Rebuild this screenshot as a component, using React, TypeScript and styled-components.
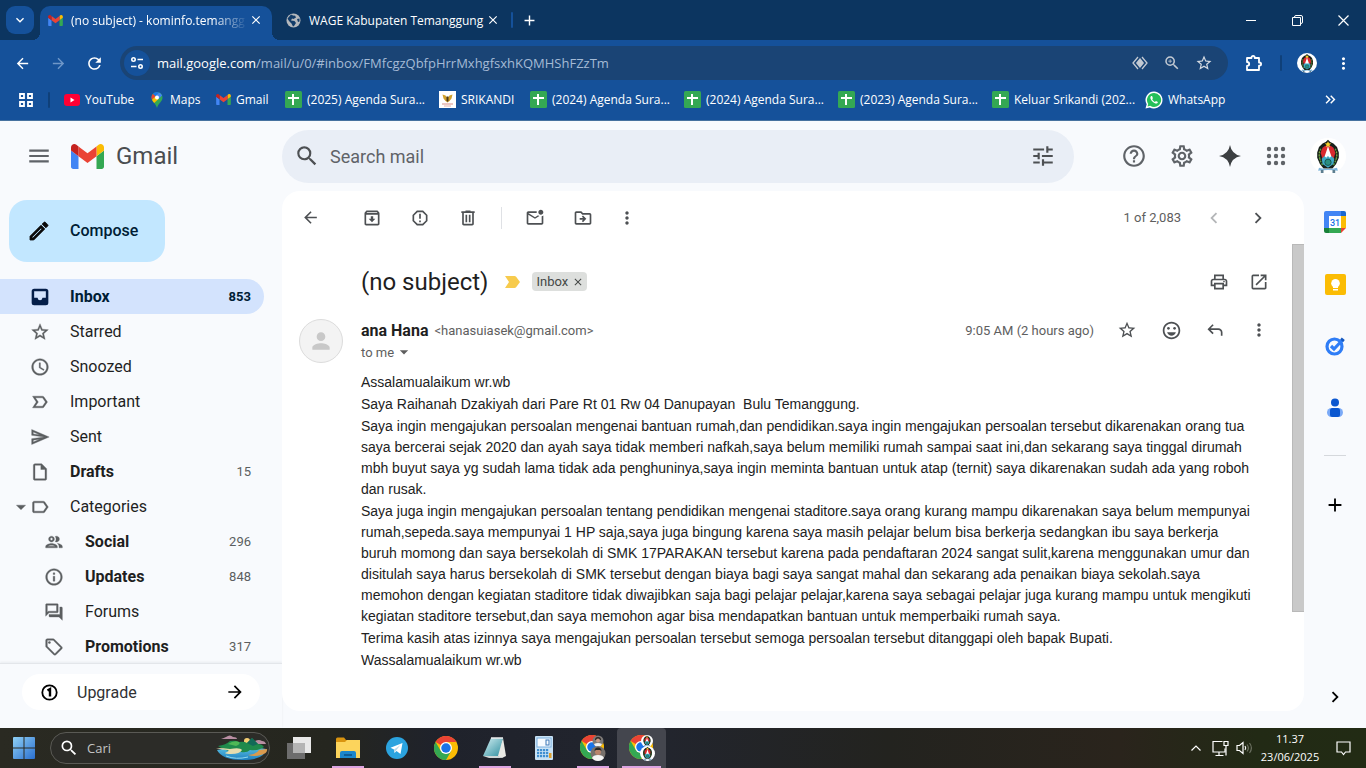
import React from 'react';
import styled, { createGlobalStyle, css } from 'styled-components';
import {
  MdMenu, MdSearch, MdTune, MdHelpOutline, MdOutlineSettings, MdOutlineEdit, MdStarBorder,
  MdAccessTime, MdLabelImportantOutline, MdOutlineSend, MdOutlineInsertDriveFile, MdLabelOutline,
  MdOutlinePeople, MdInfoOutline, MdOutlineForum, MdOutlineLocalOffer, MdArrowBack, MdArrowForward,
  MdOutlineArchive, MdReportGmailerrorred, MdOutlineMarkEmailUnread, MdOutlineDriveFileMove, MdMoreVert,
  MdOutlinePrint, MdOpenInNew, MdOutlineEmojiEmotions, MdAdd, MdChevronLeft, MdChevronRight,
  MdArrowDropDown, MdRefresh, MdKeyboardDoubleArrowRight, MdZoomIn, MdPerson,
  MdClose, MdKeyboardArrowDown,
} from 'react-icons/md';

const UI = "'Open Sans', 'Noto Sans', sans-serif";
const GS = "Roboto, 'Liberation Sans', sans-serif";

const Global = createGlobalStyle`
  *, *::before, *::after { box-sizing: border-box; }
  body { margin: 0; font-family: ${GS}; color: #1f1f1f; background: #f8fafd; }
  button { border: 0; padding: 0; margin: 0; background: none; font: inherit; color: inherit; cursor: pointer; }
  a { color: inherit; text-decoration: none; }
  svg { display: block; flex: none; }
  h1, h2, p { margin: 0; font-weight: 400; }
`;

const Screen = styled.div`
  height: 100vh;
  display: flex;
  flex-direction: column;
  overflow: hidden;
`;

const IconButton = styled.button<{ $w?: number; $h?: number; $c?: string }>`
  width: ${p => p.$w ?? 48}px;
  height: ${p => p.$h ?? 40}px;
  flex: none;
  display: flex;
  align-items: center;
  justify-content: center;
  color: ${p => p.$c ?? '#4d5053'};
`;

const Spacer = styled.div`flex: 1;`;

/* ---------- Browser chrome ---------- */

const TabStrip = styled.div`
  height: 40px;
  flex: none;
  display: flex;
  align-items: center;
  background: #0c3560;
  color: #fff;
  font: 12px ${UI};
`;

const TabSearch = styled.button`
  width: 28px;
  height: 28px;
  margin: 0 6px;
  border-radius: 9px;
  background: #15519a;
  display: flex;
  align-items: center;
  justify-content: center;
`;

const Tab = styled.div<{ $active?: boolean }>`
  position: relative;
  height: 34px;
  align-self: flex-end;
  display: flex;
  align-items: center;
  width: ${p => (p.$active ? 232 : 239)}px;
  padding: 0 ${p => (p.$active ? 8 : 10)}px 6px ${p => (p.$active ? 8 : 14)}px;
  border-radius: 10px 10px 0 0;
  ${p => p.$active && css`
    background: #15519a;
    &::before, &::after {
      content: '';
      position: absolute;
      bottom: 0;
      width: 8px;
      height: 8px;
    }
    &::before { left: -8px; background: radial-gradient(circle at 0 0, transparent 8px, #15519a 8px); }
    &::after { right: -8px; background: radial-gradient(circle at 100% 0, transparent 8px, #15519a 8px); }
  `}
`;

const TabTitle = styled.span<{ $fade?: boolean }>`
  flex: 1;
  min-width: 0;
  margin-left: 8px;
  white-space: nowrap;
  ${p => p.$fade && css`mask-image: linear-gradient(90deg, #000 80%, transparent);`}
`;

const VLine = styled.span<{ $c: string }>`
  width: 2px;
  height: 16px;
  background: ${p => p.$c};
  border-radius: 1px;
  flex: none;
`;

const AddressRow = styled.div`
  height: 46px;
  flex: none;
  display: flex;
  align-items: center;
  padding: 0 4px;
  background: #15519a;
  color: #fff;
`;

const Omnibox = styled.div`
  flex: 1;
  height: 34px;
  margin: 0 10px 0 8px;
  border-radius: 17px;
  background: #1a4475;
  display: flex;
  align-items: center;
  padding: 0 8px 0 4px;
`;

const ProfileZone = styled.div`
  display: flex;
  align-items: center;
  gap: 8px;
  margin-left: 10px;
`;

const SiteInfo = styled.button`
  width: 26px;
  height: 26px;
  border-radius: 13px;
  background: #15519a;
  display: flex;
  align-items: center;
  justify-content: center;
  margin-right: 7px;
`;

const Url = styled.div`
  flex: 1;
  font: 13px ${UI};
  color: #a5bbd6;
  white-space: nowrap;
  b { font-weight: 400; color: #fff; }
`;

const BookmarkBar = styled.nav`
  height: 35px;
  flex: none;
  display: flex;
  align-items: center;
  padding: 0 20px 7px 18px;
  background: #15519a;
  border-bottom: 1px solid #47729f;
  color: #fff;
  font: 12px ${UI};
`;

const BookmarkDivider = styled.span`
  width: 30px;
  padding-left: 14px;
  display: flex;
`;

const Bookmark = styled.a<{ $w: number }>`
  width: ${p => p.$w}px;
  display: flex;
  align-items: center;
  gap: 5px;
  white-space: nowrap;
`;

/* ---------- Gmail ---------- */

const Mail = styled.div`
  flex: 1;
  min-height: 0;
  display: flex;
  flex-direction: column;
  background: #f8fafd;
`;

const Header = styled.header`
  height: 70px;
  flex: none;
  display: flex;
  align-items: center;
  padding-right: 8px;
`;

const Brand = styled.div`
  width: 282px;
  flex: none;
  display: flex;
  align-items: center;
  padding-left: 15px;
`;

const Wordmark = styled.a`
  display: flex;
  align-items: center;
  gap: 12px;
  margin-left: 8px;
  font-size: 24px;
  color: #4a4d50;
`;

const SearchForm = styled.form`
  flex: 1;
  max-width: 792px;
  height: 53px;
  border-radius: 27px;
  background: #e9eef6;
  display: flex;
  align-items: center;
  padding: 0 7px 0 2px;
  input {
    flex: 1;
    min-width: 0;
    border: 0;
    outline: 0;
    padding: 0;
    background: none;
    font: 18px ${GS};
    color: #444746;
  }
  input::placeholder { color: #5f6368; opacity: 1; }
`;

const HeaderTools = styled.div`
  margin-left: auto;
  display: flex;
  align-items: center;
`;

const Body = styled.div`
  flex: 1;
  min-height: 0;
  display: flex;
`;

const Sidebar = styled.aside`
  width: 282px;
  flex: none;
  display: flex;
  flex-direction: column;
`;

const Compose = styled.button`
  flex: none;
  align-self: flex-start;
  width: 156px;
  height: 62px;
  margin: 9px 0 17px 9px;
  padding: 0 0 1px 18px;
  border-radius: 18px;
  background: #c2e7ff;
  color: #001d35;
  display: flex;
  align-items: center;
  gap: 19px;
  font-size: 16px;
  font-weight: 500;
  svg { color: #0a0a0a; }
  path:not([fill='none']) { stroke-width: 0.8px; }
`;

const FolderList = styled.nav`
  flex: 1;
  min-height: 0;
  overflow: hidden;
`;

const Folder = styled.a<{ $active?: boolean; $bold?: boolean; $sub?: boolean }>`
  position: relative;
  height: 35px;
  margin-right: 18px;
  padding: 0 13px 0 ${p => (p.$sub ? 44 : 30)}px;
  border-radius: 0 18px 18px 0;
  display: flex;
  align-items: center;
  gap: ${p => (p.$sub ? 21 : 20)}px;
  font-size: 16px;
  font-weight: ${p => (p.$active || p.$bold ? 700 : 400)};
  color: ${p => (p.$active ? '#001d35' : '#1f1f1f')};
  background: ${p => (p.$active ? '#d3e3fd' : 'transparent')};
  svg { color: ${p => (p.$active ? '#041e49' : '#5b5e60')}; }
  path:not([fill='none']) { stroke-width: 0.4px; }
`;

const Count = styled.span<{ $active?: boolean }>`
  margin-left: auto;
  font-size: 13px;
  font-weight: ${p => (p.$active ? 700 : 400)};
  color: ${p => (p.$active ? '#001d35' : '#5b5e60')};
`;

const Caret = styled.span`
  position: absolute;
  left: 10px;
`;

const UpgradeBox = styled.div`
  height: 65px;
  flex: none;
  padding: 10px 22px 0;
  border-top: 1px solid #e3e6ea;
  box-shadow: 0 -1px 2px #e9ecf0;
`;

const Upgrade = styled.button`
  width: 100%;
  height: 36px;
  padding: 0 15px 0 18px;
  border-radius: 18px;
  background: #fff;
  display: flex;
  align-items: center;
  font-size: 16px;
  color: #303134;
  svg { color: #000; }
  span { flex: 1; text-align: left; padding-left: 18px; }
`;

const Card = styled.main`
  flex: 1;
  min-width: 0;
  margin-bottom: 17px;
  border-radius: 18px;
  background: #fff;
  display: flex;
  flex-direction: column;
`;

const Toolbar = styled.div`
  height: 53px;
  flex: none;
  display: flex;
  align-items: center;
  padding: 0 24px 0 4px;
`;

const ToolGap = styled.span`width: 14px;`;

const ToolDivider = styled.span`
  width: 1px;
  height: 22px;
  margin: 0 9px;
  background: #dfe1e5;
`;

const Pager = styled.span`
  font-size: 13px;
  color: #5e5e5e;
  margin-right: 11px;
`;

const Scroller = styled.div`
  flex: 1;
  min-height: 0;
  display: flex;
  overflow: hidden;
`;

const Thread = styled.article`
  flex: 1;
  min-width: 0;
`;

const ScrollThumb = styled.div`
  width: 12px;
  height: 368px;
  background: #c9c9c9;
  border: 1px solid #b9b9b9;
  border-right: 0;
`;

const SubjectRow = styled.div`
  height: 75px;
  display: flex;
  align-items: center;
  padding: 0 13px 0 79px;
  h1 { font-size: 24px; line-height: 32px; margin-right: 17px; }
`;

const LabelChip = styled.span`
  display: flex;
  align-items: center;
  gap: 4px;
  height: 19px;
  margin-left: 12px;
  padding: 0 3px 0 4px;
  border-radius: 4px;
  background: #dddfdd;
  font-size: 13px;
  color: #444746;
`;

const Message = styled.div`
  display: flex;
  align-items: flex-start;
  padding: 0 11px 0 17px;
`;

const Avatar = styled.div`
  width: 44px;
  height: 44px;
  margin-right: 18px;
  flex: none;
  border-radius: 50%;
  border: 1px solid #dcdcdc;
  background: #f3f3f3;
  color: #c8c8c8;
  display: flex;
  align-items: center;
  justify-content: center;
`;

const MessageMain = styled.div`flex: 1; min-width: 0;`;

const SenderRow = styled.div`
  height: 22px;
  display: flex;
  align-items: center;
  font-size: 13px;
  color: #5e5e5e;
  h2 { font-size: 16px; font-weight: 700; color: #1f1f1f; margin-right: 6px; }
`;

const SentAt = styled.time`margin-right: 11px;`;

const Recipient = styled.button`
  display: flex;
  align-items: center;
  height: 22px;
  font-size: 13px;
  color: #5e5e5e;
`;

const Letter = styled.div`
  margin-top: 9px;
  font: 14px/21px 'Liberation Sans', Arial, sans-serif;
  color: #222;
  white-space: pre;
  p + p { margin-top: 1px; }
`;

const SidePanel = styled.aside`
  width: 62px;
  flex: none;
  display: flex;
  flex-direction: column;
  align-items: center;
  padding-bottom: 11px;
`;

const PanelLine = styled.span`
  width: 22px;
  height: 1px;
  margin: 16px 0 18px;
  background: #d5d8dc;
`;

/* ---------- Taskbar ---------- */

const Taskbar = styled.footer`
  height: 40px;
  flex: none;
  display: flex;
  align-items: center;
  padding-right: 11px;
  background: linear-gradient(90deg, #2a2a22 0%, #25261f 24%, #1f222b 32%, #22252e 48%, #23231f 65%, #2a241c 82%, #222a15 92%, #222b14 100%);
  color: #fff;
  font-family: ${UI};
`;

const TaskSearch = styled.label`
  width: 220px;
  height: 32px;
  margin-left: 2px;
  margin-right: 4px;
  padding: 0 1px 0 8px;
  border: 1px solid #5a5a55;
  border-radius: 16px;
  background: #2c2c28;
  display: flex;
  align-items: center;
  gap: 8px;
  input {
    flex: 1;
    min-width: 0;
    border: 0;
    outline: 0;
    padding: 0;
    background: none;
    font: 13px ${UI};
    color: #c4c4c4;
  }
  input::placeholder { color: #c4c4c4; opacity: 1; }
`;

const TaskButton = styled.button<{ $open?: boolean; $current?: boolean }>`
  width: 49px;
  height: 40px;
  display: flex;
  align-items: center;
  justify-content: center;
  border-radius: 4px 4px 0 0;
  background: ${p => (p.$current ? '#44464e' : 'none')};
  position: relative;
  ${p => (p.$open || p.$current) && css`
    &::after {
      content: '';
      position: absolute;
      bottom: 0;
      width: ${p.$current ? 39 : 32}px;
      height: 2px;
      background: #dba3e0;
    }
  `}
`;

const Clock = styled.time`
  width: 66px;
  margin: 0 8px 0 0;
  text-align: center;
  font-size: 11px;
  line-height: 18px;
`;

/* ---------- Drawings ---------- */

const GmailLogo = ({ w }: { w: number }) => (
  <svg width={w} height={Math.round(w * 0.75)} viewBox="52 42 88 66">
    <path fill="#4285f4" d="M58 108h14V74L52 59v43c0 3.32 2.69 6 6 6" />
    <path fill="#34a853" d="M120 108h14c3.32 0 6-2.69 6-6V59l-20 15" />
    <path fill="#fbbc04" d="M120 48v26l20-15v-8c0-7.42-8.47-11.65-14.4-7.2" />
    <path fill="#ea4335" d="M72 74V48l24 18 24-18v26L96 92" />
    <path fill="#c5221f" d="M52 51v8l20 15V48l-5.6-4.2c-5.94-4.45-14.4-.22-14.4 7.2" />
  </svg>
);

const Crest = ({ size }: { size: number }) => (
  <svg width={size} height={size} viewBox="0 0 40 40">
    <circle cx="20" cy="20" r="20" fill="#fff" />
    <path d="M20 2q2 3 6 4l4 4 2 6v6l-3 7-4 5H15l-4-5-3-7v-6l2-6 4-4q4-1 6-4z" fill="#17201a" />
    <path d="M12 12c-3 6-2 12 2 18M28 12c3 6 2 12-2 18" stroke="#5aa03f" strokeWidth="1.6" strokeDasharray="2 1.4" fill="none" />
    <path d="M10.500 15q-1 6 2 11M29.500 15q1 6-2 11" stroke="#d9c04a" strokeWidth="0.8" strokeDasharray="1 2" fill="none" />
    <path d="M20 8c5 0 7.500 4 8 9l-2 7H14l-2-7c.5-5 3-9 8-9z" fill="#d92a2f" />
    <path d="M20 9l1.500 5 2.500 7-1.500 3h-5L16 21l2.500-7z" fill="#fff" />
    <path d="M13 23l3-3 2 2 2-2 2 2 2-2 3 3-1 6-6 4-6-4z" fill="#3fa9c4" />
    <circle cx="20" cy="27" r="3.500" fill="#2a8f80" stroke="#15504a" />
    <path d="M20 3.500l1.100 2.400 2.500.2-2 1.700.7 2.500-2.300-1.300-2.300 1.300.7-2.500-2-1.700 2.500-.2z" fill="#f3d02c" />
    <path d="M10 33q10 3 20 0l1 3.500q-11-2-22 0z" fill="#7fb6dc" />
    <path d="M12 35.500h3V39h-3zM25 35.500h3V39h-3z" fill="#5d7e90" />
  </svg>
);

const SheetIcon = () => (
  <svg width="17" height="17" viewBox="0 0 17 17">
    <rect width="17" height="17" rx="1.500" fill="#34a853" />
    <path d="M8 3v11M3 7h11" stroke="#fff" strokeWidth="2" />
  </svg>
);

const YoutubeIcon = () => (
  <svg width="16" height="16" viewBox="0 0 16 16">
    <rect y="2" width="16" height="12" rx="3" fill="#f03" />
    <path d="M6.500 5.500v5L10.500 8z" fill="#fff" />
  </svg>
);

const MapsIcon = () => (
  <svg width="16" height="16" viewBox="0 0 16 16">
    <path d="M8 0a5.500 5.500 0 0 0-5.500 5.500c0 4 4 5.500 5.500 10.500 1.500-5 5.500-6.500 5.500-10.500A5.500 5.500 0 0 0 8 0z" fill="#34a853" />
    <path d="M8 0a5.500 5.500 0 0 0-4.200 2L6.500 4.200 10 .4A5.500 5.500 0 0 0 8 0z" fill="#1a73e8" />
    <path d="M3.800 2A5.500 5.500 0 0 0 3 7.800l3.500-3.600z" fill="#ea4335" />
    <path d="M3 7.800c.5 1.200 1.300 2.100 2.200 3.200L9.500 7 6.300 4.400z" fill="#fbbc04" />
    <path d="M10 .4 6.600 4.300 9.500 7l3.600-3.500A5.500 5.500 0 0 0 10 .4z" fill="#4285f4" />
    <circle cx="8" cy="5.500" r="2" fill="#fff" />
  </svg>
);

const SrikandiIcon = () => (
  <svg width="17" height="17" viewBox="0 0 17 17">
    <rect width="17" height="17" fill="#fff" />
    <path d="M3.500 3.500l3 1 1 1.500h2l1-1.500 3-1-1 4-2 2.500-2 1.500-2-1.500-2-2.500z" fill="#d0a02c" />
    <path d="M7.500 5.500h2v4l-1 1.500-1-1.500z" fill="#4a3a1c" />
    <path d="M3 13h11" stroke="#d98f86" /><path d="M5 15h7" stroke="#e3b0aa" />
  </svg>
);

const WhatsAppIcon = () => (
  <svg width="18" height="18" viewBox="0 0 18 18">
    <path d="M9 .5a8.500 8.500 0 0 0-7.300 12.800L.5 17.500l4.300-1.100A8.500 8.500 0 1 0 9 .5z" fill="#fff" />
    <path d="M9 2a7 7 0 0 0-5.800 10.900l-.7 2.600 2.700-.7A7 7 0 1 0 9 2z" fill="#25c05a" />
    <path d="M6.300 5c-1 .7-1.200 1.900-.5 3.300 1 2 2.500 3.500 4.600 4.200 1.200.3 2.300-.2 2.500-1.600l-2-1-.9 1c-1.300-.5-2.300-1.500-2.800-2.700l.7-.9L7.100 5z" fill="#fff" />
  </svg>
);

const GlobeIcon = () => (
  <svg width="15" height="15" viewBox="0 0 15 15">
    <circle cx="7.500" cy="7.500" r="7" fill="#b4b8bc" />
    <path d="M5 1.500q2 1.500 4 1l1 2-2.500 1.500L6 5.500l-1 2 3.500.5 1.500 2-2 3-1 .5-1.500-3L3 8 1.500 5.500zM11 6l2.500-.5v3L12 9z" fill="#123c69" />
  </svg>
);

const PuzzleIcon = () => (
  <svg width="18" height="18" viewBox="0 0 18 18" fill="none" stroke="currentColor" strokeWidth="1.800" strokeLinejoin="round">
    <path d="M2 4h4.500V3.500a1.600 1.600 0 0 1 3.200 0V4H14v4.500h.5a1.600 1.600 0 0 1 0 3.200H14V16H2v-4q2.200-.2 2.200-2T2 8z" />
  </svg>
);

const AppsDots = () => (
  <svg width="20" height="20" viewBox="0 0 20 20" fill="currentColor">
    {[3, 10, 17].map(y => [3, 10, 17].map(x => <circle key={`${x}-${y}`} cx={x} cy={y} r="2.200" />))}
  </svg>
);

const GridIcon = () => (
  <svg width="16" height="16" viewBox="0 0 16 16" fill="none" stroke="#fff" strokeWidth="1.800">
    <path d="M2 2h4v4H2zM10 2h4v4h-4zM2 10h4v4H2zM10 10h4v4h-4z" />
  </svg>
);

const SiteControls = () => (
  <svg width="14" height="14" viewBox="0 0 14 14" fill="none" stroke="#fff" strokeWidth="1.600">
    <circle cx="3.500" cy="3.500" r="1.700" /><path d="M7.500 3.500H13M1 10.500h5.500" /><circle cx="10.500" cy="10.500" r="1.700" />
  </svg>
);

const InboxIcon = ({ size }: { size: number }) => (
  <svg width={size} height={size} viewBox="0 0 24 24" fill="currentColor" fillRule="evenodd">
    <path d="M5 2h14q3 0 3 3v14q0 3-3 3H5q-3 0-3-3V5q0-3 3-3zm0 3v8h4q.5 3 3 3t3-3h4V5z" />
  </svg>
);

const TrashIcon = () => (
  <svg width="20" height="20" viewBox="0 0 24 24" fill="currentColor">
    <path d="M15 4V3H9v1H4v2h1v13c0 1.100.9 2 2 2h10c1.100 0 2-.9 2-2V6h1V4h-5zm2 15H7V6h10v13z" />
    <path d="M9 8h2v9H9zm4 0h2v9h-2z" />
  </svg>
);

const ReplyIcon = () => (
  <svg width="20" height="20" viewBox="0 -960 960 960" fill="currentColor">
    <path d="M760-200v-160q0-50-35-85t-85-35H273l144 144-57 56-240-240 240-240 57 56-144 144h367q83 0 141.500 58.500T840-360v160h-80Z" />
  </svg>
);

const Spark = () => (
  <svg width="22" height="22" viewBox="0 0 22 22"><path d="M11 0q1.600 9.400 11 11-9.400 1.600-11 11-1.600-9.400-11-11 9.400-1.600 11-11z" fill="#3c3f42" /></svg>
);

const ImportantMark = () => (
  <svg width="15" height="12" viewBox="0 0 15 12"><path d="M0 0h9.500q1 0 1.600.8L15 6l-3.900 5.200q-.6.800-1.600.8H0l4-6z" fill="#f7cb4d" /></svg>
);

const OneIcon = () => (
  <svg width="19" height="19" viewBox="0 0 19 19" fill="none" stroke="currentColor">
    <circle cx="9.500" cy="9.500" r="7.200" strokeWidth="1.800" /><path d="M7.500 7.500 10 6v7.500" strokeWidth="2.400" />
  </svg>
);

const CalendarIcon = () => (
  <svg width="22" height="22" viewBox="0 0 22 22">
    <path d="M2 0h15v5H5v12H0V2Q0 0 2 0z" fill="#4285f4" /><path d="M17 0h3q2 0 2 2v3h-5z" fill="#1967d2" />
    <path d="M17 5h5v12h-5z" fill="#fbbc04" /><path d="M5 17h12v5H5z" fill="#34a853" />
    <path d="M0 17h5v5H2q-2 0-2-2z" fill="#188038" /><path d="M17 17h5l-5 5z" fill="#ea4335" />
    <path d="M5 5h12v12H5z" fill="#fff" />
    <text x="11" y="14.500" textAnchor="middle" fontFamily="Roboto, sans-serif" fontSize="9" fontWeight="500" fill="#1a73e8">31</text>
  </svg>
);

const KeepIcon = () => (
  <svg width="21" height="21" viewBox="0 0 21 21">
    <rect width="21" height="21" rx="2" fill="#fbbc04" />
    <circle cx="10.500" cy="9.300" r="4.300" fill="#fff" /><path d="M8 12h5v2H8zM8 15h5v1.600H8z" fill="#fff" />
  </svg>
);

const TasksIcon = () => (
  <svg width="20" height="20" viewBox="0 0 20 20" fill="none">
    <circle cx="9.500" cy="10.500" r="7.500" stroke="#2f7df6" strokeWidth="3.200" />
    <path d="M6 10l3 3 8.500-9" stroke="#2f7df6" strokeWidth="3.200" /><path d="M16 2.500l3 2.500" stroke="#1558c0" strokeWidth="2.500" />
  </svg>
);

const ContactsIcon = () => (
  <svg width="18" height="20" viewBox="0 0 18 20">
    <circle cx="9" cy="4.500" r="4" fill="#0b57d0" /><rect x="1" y="10" width="16" height="9" rx="4.500" fill="#7baaf7" />
    <rect x="4" y="10" width="10" height="9" rx="2.500" fill="#0b57d0" />
  </svg>
);

const WindowsLogo = () => (
  <svg width="22" height="22" viewBox="0 0 22 22">
    <defs><linearGradient id="win" x1="0" y1="0" x2="1" y2="1"><stop offset="0" stopColor="#8fd0f5" /><stop offset="1" stopColor="#2a6fd0" /></linearGradient></defs>
    <path d="M1 0h9.500v10.500H0V1q0-1 1-1zM11.500 0H21q1 0 1 1v9.500H11.500zM0 11.500h10.500V22H1q-1 0-1-1zM11.500 11.500H22V21q0 1-1 1h-9.500z" fill="url(#win)" />
  </svg>
);

const IslandArt = () => (
  <svg width="54" height="26" viewBox="0 0 54 26">
    <defs><linearGradient id="sea" x1="0" y1="0" x2="0" y2="1"><stop offset="0" stopColor="#5fc3e4" /><stop offset="1" stopColor="#1d7fc0" /></linearGradient></defs>
    <path d="M7 4q3-1 5-2 4-3 7 0 4 0 4 2zM41 6q4-2 7 0 3 0 4 3H41z" fill="#b98fa3" />
    <circle cx="33" cy="6" r="3" fill="#f4cf73" />
    <path d="M3 15q24-6 49-1-1 11-24 11-20 0-25-10z" fill="url(#sea)" />
    <path d="M4 11q8-1 12-5 6-1 9 1 5-1 8 1l5-5 6 6q4 0 6 3-5 4-14 3-3 3-9 2-13 1-23-6z" fill="#1f8a4c" />
    <path d="M33 8l5-5 6 6-5 2z" fill="#126a58" />
    <path d="M14 9q6-4 11-2 2 2-3 4z" fill="#4fb856" />
    <path d="M2 13q8 0 14 1 10-2 12 1-2 4-11 4-5 0-6-1 5-2 3-3-6 0-12-2z" fill="#e6dcae" />
    <path d="M34 20q9-1 11-5l8-1q1 4-6 6-7 2-13 0z" fill="#d99a4e" />
    <path d="M12 21q10 4 22 1" stroke="#8fd8ee" fill="none" />
  </svg>
);

const TaskView = () => (
  <svg width="24" height="22" viewBox="0 0 24 22"><path d="M6 0h18v16H6z" fill="#e8e8e8" /><path d="M0 6h18v16H0z" fill="#6d6d6d" /><path d="M6 6h12v10H6z" fill="#b4b4b4" /></svg>
);

const Explorer = () => (
  <svg width="24" height="22" viewBox="0 0 24 22">
    <path d="M0 2q0-1.500 1.500-1.500H8L10 3h14v4H0z" fill="#d9940f" /><path d="M0 5h9l2-2h13v18H0z" fill="#fcd45c" />
    <path d="M4 16q0-2 2-2h12q2 0 2 2v5H4z" fill="#1c86cc" /><path d="M8 18h8" stroke="#0b4f86" strokeWidth="1.500" />
  </svg>
);

const Telegram = () => (
  <svg width="22" height="22" viewBox="0 0 22 22">
    <circle cx="11" cy="11" r="11" fill="#2ba3df" /><path d="M4.500 10.800 16.500 6l-2 11-4-3-2 2-.5-3.500z" fill="#fff" /><path d="M8 12.500 14.500 8l-4.500 5.500-1.500 2z" fill="#b9d9ea" />
  </svg>
);

const Chrome = ({ size }: { size: number }) => (
  <svg width={size} height={size} viewBox="0 0 48 48">
    <circle cx="24" cy="24" r="24" fill="#fbbc04" />
    <path d="M24 24 3.200 12A24 24 0 0 1 44.800 12H24z" fill="#ea4335" />
    <path d="M3.200 12 13.600 30 24 36l10.400-6L24 48A24 24 0 0 1 3.200 12z" fill="#34a853" />
    <circle cx="24" cy="24" r="12" fill="#fff" /><circle cx="24" cy="24" r="9.500" fill="#1a73e8" />
  </svg>
);

const Notepad = () => (
  <svg width="24" height="24" viewBox="0 0 24 24">
    <defs><linearGradient id="pad" x1="0" y1="0" x2="1" y2="1"><stop offset="0" stopColor="#d6f1f4" /><stop offset="1" stopColor="#2f8fa0" /></linearGradient></defs>
    <path d="M20 2l3 18-4 2-6-2z" fill="#e9e9e4" /><path d="M8 2h12l-5 18H0z" fill="url(#pad)" /><path d="M0 20h15l5 2H6z" fill="#cfd6d6" /><path d="M8 2h12" stroke="#eee" strokeWidth="1.500" />
  </svg>
);

const Calculator = () => (
  <svg width="18" height="24" viewBox="0 0 18 24">
    <rect width="18" height="24" rx="1" fill="#c8e2f5" /><rect x="2" y="2" width="14" height="9" fill="#f6fbff" stroke="#78aede" />
    <rect x="11" y="4" width="3" height="5" fill="none" stroke="#3b79b8" />
    {[13, 16, 19].map(y => [2, 5, 8, 11].map(x => <rect key={`${x}-${y}`} x={x} y={y} width="2.200" height="2.200" fill="#3f8fd0" />))}
    <rect x="14" y="17" width="2.500" height="5" fill="#e0a02c" />
  </svg>
);

const ChromeProfile = ({ crest }: { crest?: boolean }) => (
  <svg width="26" height="26" viewBox="0 0 26 26">
    <Chrome size={24} />
    {crest ? (
      <>
        <g transform="translate(12 0)"><Crest size={12} /></g>
        <g transform="translate(11 11)"><Crest size={15} /></g>
      </>
    ) : (
      <>
        <circle cx="18" cy="6" r="5.500" fill="#7d7a78" /><path d="M15 5a3 3 0 0 1 6 0z" fill="#2a2725" /><circle cx="18" cy="5.500" r="2" fill="#c69b86" /><path d="M14 9q4-2 8 0-1 3-4 3t-4-3z" fill="#f0f0f0" />
        <circle cx="18" cy="18.500" r="7.500" fill="#77716c" /><circle cx="18" cy="17" r="3" fill="#b9846c" /><path d="M14.500 16a3.500 3.500 0 0 1 7 0l-1.500-1h-4z" fill="#2a2725" /><path d="M12 23q1-3 6-3t6 3q-2 3-6 3t-6-3z" fill="#f4f4f4" />
      </>
    )}
  </svg>
);

const MonitorIcon = () => (
  <svg width="18" height="17" viewBox="0 0 18 17" fill="none" stroke="#fff" strokeWidth="1.200">
    <path d="M10.500 1.500H1v10.500h12V8.500M7 12v3M3.500 15.500h8" /><path d="M12 1.500h4v4h-4zM14 5.500v10" />
  </svg>
);

const SpeakerIcon = () => (
  <svg width="18" height="16" viewBox="0 0 18 16" fill="none" stroke="#fff" strokeWidth="1.200">
    <path d="M1 5.500h2.500L7 2.500v11l-3.500-3H1zM9 6q1.500 2 0 4" /><path d="M11 4.500q2.800 3.500 0 7M13.500 3q3.800 5 0 10" stroke="#6b7060" />
  </svg>
);

/* ---------- Data ---------- */

const bookmarks = [
  { label: 'YouTube', w: 85, icon: <YoutubeIcon /> },
  { label: 'Maps', w: 67, icon: <MapsIcon /> },
  { label: 'Gmail', w: 69, icon: <GmailLogo w={15} /> },
  { label: '(2025) Agenda Sura...', w: 154, icon: <SheetIcon /> },
  { label: 'SRIKANDI', w: 91, icon: <SrikandiIcon /> },
  { label: '(2024) Agenda Sura...', w: 154, icon: <SheetIcon /> },
  { label: '(2024) Agenda Sura...', w: 154, icon: <SheetIcon /> },
  { label: '(2023) Agenda Sura...', w: 154, icon: <SheetIcon /> },
  { label: 'Keluar Srikandi (202...', w: 153, icon: <SheetIcon /> },
  { label: 'WhatsApp', w: 90, icon: <WhatsAppIcon /> },
];

const folders = [
  { label: 'Inbox', Icon: InboxIcon, count: '853', active: true },
  { label: 'Starred', Icon: MdStarBorder },
  { label: 'Snoozed', Icon: MdAccessTime },
  { label: 'Important', Icon: MdLabelImportantOutline },
  { label: 'Sent', Icon: MdOutlineSend },
  { label: 'Drafts', Icon: MdOutlineInsertDriveFile, count: '15', bold: true },
  { label: 'Categories', Icon: MdLabelOutline, caret: true },
  { label: 'Social', Icon: MdOutlinePeople, count: '296', bold: true, sub: true },
  { label: 'Updates', Icon: MdInfoOutline, count: '848', bold: true, sub: true },
  { label: 'Forums', Icon: MdOutlineForum, sub: true },
  { label: 'Promotions', Icon: MdOutlineLocalOffer, count: '317', bold: true, sub: true },
];

const letter = [
  'Assalamualaikum wr.wb',
  'Saya Raihanah Dzakiyah dari Pare Rt 01 Rw 04 Danupayan  Bulu Temanggung.',
  `Saya ingin mengajukan persoalan mengenai bantuan rumah,dan pendidikan.saya ingin mengajukan persoalan tersebut dikarenakan orang tua
saya bercerai sejak 2020 dan ayah saya tidak memberi nafkah,saya belum memiliki rumah sampai saat ini,dan sekarang saya tinggal dirumah
mbh buyut saya yg sudah lama tidak ada penghuninya,saya ingin meminta bantuan untuk atap (ternit) saya dikarenakan sudah ada yang roboh
dan rusak.`,
  `Saya juga ingin mengajukan persoalan tentang pendidikan mengenai staditore.saya orang kurang mampu dikarenakan saya belum mempunyai
rumah,sepeda.saya mempunyai 1 HP saja,saya juga bingung karena saya masih pelajar belum bisa berkerja sedangkan ibu saya berkerja
buruh momong dan saya bersekolah di SMK 17PARAKAN tersebut karena pada pendaftaran 2024 sangat sulit,karena menggunakan umur dan
disitulah saya harus bersekolah di SMK tersebut dengan biaya bagi saya sangat mahal dan sekarang ada penaikan biaya sekolah.saya
memohon dengan kegiatan staditore tidak diwajibkan saja bagi pelajar pelajar,karena saya sebagai pelajar juga kurang mampu untuk mengikuti
kegiatan staditore tersebut,dan saya memohon agar bisa mendapatkan bantuan untuk memperbaiki rumah saya.`,
  'Terima kasih atas izinnya saya mengajukan persoalan tersebut semoga persoalan tersebut ditanggapi oleh bapak Bupati.',
  'Wassalamualaikum wr.wb',
];

export default function App() {
  return (
    <Screen>
      <Global />
      <TabStrip>
        <TabSearch aria-label="Search tabs"><MdKeyboardArrowDown size={16} /></TabSearch>
        <Tab $active>
          <GmailLogo w={15} />
          <TabTitle $fade>(no subject) - kominfo.temangg</TabTitle>
          <IconButton $w={16} $h={20} $c="#fff" aria-label="Close tab"><MdClose size={14} /></IconButton>
        </Tab>
        <Tab>
          <GlobeIcon />
          <TabTitle>WAGE Kabupaten Temanggung</TabTitle>
          <IconButton $w={16} $h={20} $c="#fff" aria-label="Close tab"><MdClose size={14} /></IconButton>
        </Tab>
        <VLine $c="#15519a" />
        <IconButton $w={32} $c="#fff" aria-label="New tab"><MdAdd size={17} /></IconButton>
        <Spacer />
        <IconButton $w={46} $c="#fff" aria-label="Minimize">
          <svg width="10" height="10" viewBox="0 0 10 10" stroke="#fff"><path d="M0 5.500h10" /></svg>
        </IconButton>
        <IconButton $w={46} $c="#fff" aria-label="Restore">
          <svg width="11" height="11" viewBox="0 0 11 11" stroke="#fff" fill="none"><path d="M.5 2.500h8v8h-8zM2.500 2.500V2q0-1.500 1.500-1.500h5q1.500 0 1.500 1.500v5q0 1.500-1.500 1.500" /></svg>
        </IconButton>
        <IconButton $w={46} $c="#fff" aria-label="Close">
          <svg width="11" height="11" viewBox="0 0 11 11" stroke="#fff" strokeWidth="1.200"><path d="M.5.500l10 10M10.500.500l-10 10" /></svg>
        </IconButton>
      </TabStrip>

      <AddressRow>
        <IconButton $w={36} $c="#fff" aria-label="Back"><MdArrowBack size={17} /></IconButton>
        <IconButton $w={36} $c="#6f97c8" aria-label="Forward"><MdArrowForward size={17} /></IconButton>
        <IconButton $w={36} $c="#fff" aria-label="Reload"><MdRefresh size={19} /></IconButton>
        <Omnibox>
          <SiteInfo aria-label="Site information"><SiteControls /></SiteInfo>
          <Url><b>mail.google.com</b>/mail/u/0/#inbox/FMfcgzQbfpHrrMxhgfsxhKQMHShFZzTm</Url>
          <IconButton $w={32} $h={32} aria-label="Compare">
            <svg width="16" height="14" viewBox="0 0 16 14" fill="none" stroke="#c3cad3" strokeWidth="1.300">
              <path d="M6 1 1 7l5 6M10 1l5 6-5 6" /><path d="M8 3l3.200 4L8 11 4.800 7z" fill="#c3cad3" />
            </svg>
          </IconButton>
          <IconButton $w={32} $h={32} $c="#c3cad3" aria-label="Zoom"><MdZoomIn size={18} /></IconButton>
          <IconButton $w={32} $h={32} $c="#d5dbe2" aria-label="Bookmark"><MdStarBorder size={18} /></IconButton>
        </Omnibox>
        <IconButton $w={32} $c="#fff" aria-label="Extensions"><PuzzleIcon /></IconButton>
        <ProfileZone>
          <VLine $c="#0f4079" />
          <IconButton $w={34} aria-label="Profile"><Crest size={20} /></IconButton>
        </ProfileZone>
        <IconButton $w={38} $c="#fff" aria-label="Menu"><MdMoreVert size={19} /></IconButton>
      </AddressRow>

      <BookmarkBar>
        <IconButton $w={16} $h={20} aria-label="Tab groups"><GridIcon /></IconButton>
        <BookmarkDivider><VLine $c="#0f4079" /></BookmarkDivider>
        {bookmarks.map((b, i) => (
          <Bookmark href="#" key={i} $w={b.w}>{b.icon}{b.label}</Bookmark>
        ))}
        <Spacer />
        <IconButton $w={32} $h={20} $c="#fff" aria-label="More bookmarks"><MdKeyboardDoubleArrowRight size={17} /></IconButton>
      </BookmarkBar>

      <Mail>
        <Header>
          <Brand>
            <IconButton $c="#5f6368" aria-label="Main menu"><MdMenu size={26} /></IconButton>
            <Wordmark href="#"><GmailLogo w={33} />Gmail</Wordmark>
          </Brand>
          <SearchForm>
            <IconButton $w={46} aria-label="Search"><MdSearch size={26} /></IconButton>
            <input type="search" placeholder="Search mail" aria-label="Search mail" />
            <IconButton aria-label="Search options"><MdTune size={26} /></IconButton>
          </SearchForm>
          <HeaderTools>
            <IconButton $c="#5f6368" aria-label="Support"><MdHelpOutline size={26} /></IconButton>
            <IconButton $c="#5f6368" aria-label="Settings"><MdOutlineSettings size={26} /></IconButton>
            <IconButton aria-label="Gemini"><Spark /></IconButton>
            <IconButton $w={44} $c="#5f6368" aria-label="Google apps"><AppsDots /></IconButton>
            <IconButton $w={60} aria-label="Account"><Crest size={36} /></IconButton>
          </HeaderTools>
        </Header>

        <Body>
          <Sidebar>
            <Compose><MdOutlineEdit size={24} />Compose</Compose>
            <FolderList>
              {folders.map(f => (
                <Folder href="#" key={f.label} $active={f.active} $bold={f.bold} $sub={f.sub}>
                  {f.caret && <Caret><MdArrowDropDown size={22} /></Caret>}
                  <f.Icon size={20} />
                  {f.label}
                  {f.count && <Count $active={f.active}>{f.count}</Count>}
                </Folder>
              ))}
            </FolderList>
            <UpgradeBox>
              <Upgrade><OneIcon /><span>Upgrade</span><MdArrowForward size={20} /></Upgrade>
            </UpgradeBox>
          </Sidebar>

          <Card>
            <Toolbar>
              <IconButton aria-label="Back to inbox"><MdArrowBack size={19} /></IconButton>
              <ToolGap />
              <IconButton aria-label="Archive"><MdOutlineArchive size={20} /></IconButton>
              <IconButton aria-label="Report spam"><MdReportGmailerrorred size={20} /></IconButton>
              <IconButton aria-label="Delete"><TrashIcon /></IconButton>
              <ToolDivider />
              <IconButton aria-label="Mark as unread"><MdOutlineMarkEmailUnread size={20} /></IconButton>
              <IconButton aria-label="Move to"><MdOutlineDriveFileMove size={20} /></IconButton>
              <IconButton $w={40} aria-label="More"><MdMoreVert size={20} /></IconButton>
              <Spacer />
              <Pager>1 of 2,083</Pager>
              <IconButton $w={44} $c="#b4b6b8" aria-label="Newer"><MdChevronLeft size={22} /></IconButton>
              <IconButton $w={44} aria-label="Older"><MdChevronRight size={22} /></IconButton>
            </Toolbar>
            <Scroller>
              <Thread>
                <SubjectRow>
                  <h1>(no subject)</h1>
                  <ImportantMark />
                  <LabelChip>Inbox<MdClose size={12} /></LabelChip>
                  <Spacer />
                  <IconButton $w={40} aria-label="Print all"><MdOutlinePrint size={20} /></IconButton>
                  <IconButton $w={40} aria-label="Open in new window"><MdOpenInNew size={20} /></IconButton>
                </SubjectRow>
                <Message>
                  <Avatar><MdPerson size={26} /></Avatar>
                  <MessageMain>
                    <SenderRow>
                      <h2>ana Hana</h2>&lt;hanasuiasek@gmail.com&gt;
                      <Spacer />
                      <SentAt>9:05 AM (2 hours ago)</SentAt>
                      <IconButton $w={44} $h={22} aria-label="Star"><MdStarBorder size={20} /></IconButton>
                      <IconButton $w={44} $h={22} aria-label="Add reaction"><MdOutlineEmojiEmotions size={21} /></IconButton>
                      <IconButton $w={44} $h={22} aria-label="Reply"><ReplyIcon /></IconButton>
                      <IconButton $w={44} $h={22} aria-label="More"><MdMoreVert size={20} /></IconButton>
                    </SenderRow>
                    <Recipient>to me<MdArrowDropDown size={20} /></Recipient>
                    <Letter>{letter.map(p => <p key={p}>{p}</p>)}</Letter>
                  </MessageMain>
                </Message>
              </Thread>
              <ScrollThumb />
            </Scroller>
          </Card>

          <SidePanel>
            <IconButton $h={62} aria-label="Calendar"><CalendarIcon /></IconButton>
            <IconButton $h={62} aria-label="Keep"><KeepIcon /></IconButton>
            <IconButton $h={62} aria-label="Tasks"><TasksIcon /></IconButton>
            <IconButton $h={62} aria-label="Contacts"><ContactsIcon /></IconButton>
            <PanelLine />
            <IconButton $h={62} $c="#000" aria-label="Get add-ons"><MdAdd size={22} /></IconButton>
            <Spacer />
            <IconButton $c="#000" aria-label="Hide side panel"><MdChevronRight size={22} /></IconButton>
          </SidePanel>
        </Body>
      </Mail>

      <Taskbar>
        <IconButton $w={48} aria-label="Start"><WindowsLogo /></IconButton>
        <TaskSearch>
          <MdSearch size={20} />
          <input placeholder="Cari" aria-label="Cari" />
          <IslandArt />
        </TaskSearch>
        <TaskButton aria-label="Task view"><TaskView /></TaskButton>
        <TaskButton $open aria-label="File Explorer"><Explorer /></TaskButton>
        <TaskButton aria-label="Telegram"><Telegram /></TaskButton>
        <TaskButton aria-label="Chrome"><Chrome size={24} /></TaskButton>
        <TaskButton $open aria-label="Notepad"><Notepad /></TaskButton>
        <TaskButton aria-label="Calculator"><Calculator /></TaskButton>
        <TaskButton $open aria-label="Chrome profile"><ChromeProfile /></TaskButton>
        <TaskButton $current aria-label="Chrome, kominfo"><ChromeProfile crest /></TaskButton>
        <Spacer />
        <IconButton $w={24} aria-label="Hidden icons">
          <svg width="10" height="6" viewBox="0 0 10 6" fill="none" stroke="#fff" strokeWidth="1.200"><path d="M.5 5.500 5 1l4.500 4.500" /></svg>
        </IconButton>
        <IconButton $w={25} aria-label="Network"><MonitorIcon /></IconButton>
        <IconButton $w={24} aria-label="Volume"><SpeakerIcon /></IconButton>
        <Clock>11.37<br />23/06/2025</Clock>
        <IconButton $w={24} aria-label="Notifications">
          <svg width="15" height="15" viewBox="0 0 15 15" fill="none" stroke="#fff" strokeWidth="1.200"><path d="M1 1h13v10H9.500L7.500 13.500 5.500 11H1z" /></svg>
        </IconButton>
      </Taskbar>
    </Screen>
  );
}
